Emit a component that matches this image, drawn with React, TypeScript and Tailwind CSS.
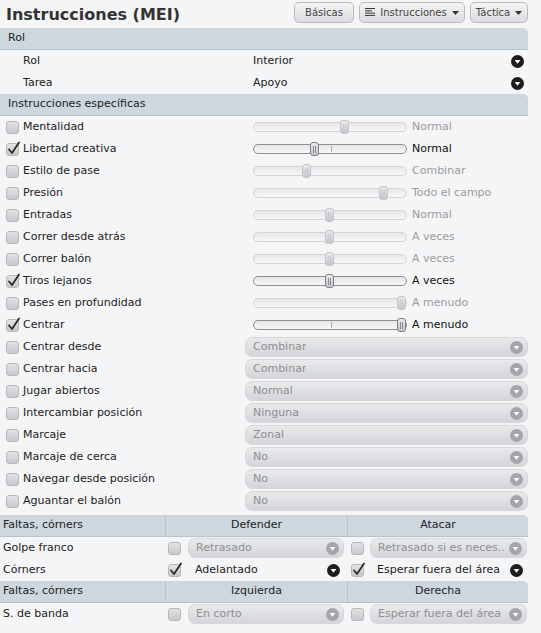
import React from "react";

const font = { fontFamily: '"DejaVu Sans", Verdana, sans-serif' };

function Arrow({ dark }: { dark?: boolean }) {
  return (
    <svg width="13" height="13" viewBox="0 0 13 13" className="shrink-0">
      <circle cx="6.5" cy="6.5" r="6.5" fill={dark ? "#1c1c1c" : "#a3a5a8"} />
      <path d="M3.6 5 L9.4 5 L6.5 8.8 Z" fill="#fff" />
    </svg>
  );
}

function Check({ on }: { on?: boolean }) {
  return (
    <div className="relative w-[13px] h-[13px] shrink-0 rounded-[3px] border border-[#b5b7ba] bg-gradient-to-b from-[#e2e3e5] to-[#c6c8cb]">
      {on && (
        <svg width="14" height="14" viewBox="0 0 14 14" className="absolute left-[0px] top-[-3px]">
          <path d="M2 8.5 L5 12 L12 1.5" fill="none" stroke="#2a2a2a" strokeWidth="1.8" strokeLinecap="round" strokeLinejoin="round" />
        </svg>
      )}
    </div>
  );
}

function Slider({ pos, active, tick }: { pos: number; active?: boolean; tick?: boolean }) {
  return (
    <div
      className={
        "relative w-[154px] h-[10px] rounded-full border bg-gradient-to-b from-[#e6e7e9] to-[#f6f7f8] " +
        (active ? "border-[#8d8f92]" : "border-[#d2d4d6]")
      }
    >
      {tick && <div className="absolute left-[77px] top-[1px] w-px h-[6px] bg-[#a9abae]" />}
      <div
        className={
          "absolute top-[-3px] w-[9px] h-[14px] rounded-[3px] border flex justify-center gap-[1px] items-center bg-gradient-to-b from-[#e9eaec] to-[#c3c5c8] " +
          (active ? "border-[#7f8184]" : "border-[#c4c6c9]")
        }
        style={{ left: pos - 5 }}
      >
        <div className={"w-px h-[7px] " + (active ? "bg-[#8a8c8f]" : "bg-[#c9cbce]")} />
        <div className={"w-px h-[7px] " + (active ? "bg-[#8a8c8f]" : "bg-[#c9cbce]")} />
      </div>
    </div>
  );
}

function Select({ text, className }: { text: string; className?: string }) {
  return (
    <div
      className={
        "h-[20px] rounded-[7px] border border-[#d6d8da] bg-gradient-to-b from-[#e9eaec] to-[#d3d5d8] flex items-center justify-between pl-[7px] pr-[4px] " +
        (className || "")
      }
    >
      <span className="text-[#8d8f92] truncate">{text}</span>
      <Arrow />
    </div>
  );
}

function Header({ children }: { children: React.ReactNode }) {
  return (
    <div className="h-[22px] bg-[#ced7de] border-b border-[#b8c2ca] rounded-tr-[5px] flex items-center pl-[8px] text-[#222]">
      {children}
    </div>
  );
}

const sliders = [
  { label: "Mentalidad", pos: 91, text: "Normal" },
  { label: "Libertad creativa", pos: 61, text: "Normal", on: true },
  { label: "Estilo de pase", pos: 53, text: "Combinar" },
  { label: "Presión", pos: 130, text: "Todo el campo" },
  { label: "Entradas", pos: 76, text: "Normal" },
  { label: "Correr desde atrás", pos: 76, text: "A veces" },
  { label: "Correr balón", pos: 76, text: "A veces" },
  { label: "Tiros lejanos", pos: 76, text: "A veces", on: true },
  { label: "Pases en profundidad", pos: 148, text: "A menudo" },
  { label: "Centrar", pos: 148, text: "A menudo", on: true },
];

const selects = [
  ["Centrar desde", "Combinar"],
  ["Centrar hacia", "Combinar"],
  ["Jugar abiertos", "Normal"],
  ["Intercambiar posición", "Ninguna"],
  ["Marcaje", "Zonal"],
  ["Marcaje de cerca", "No"],
  ["Navegar desde posición", "No"],
  ["Aguantar el balón", "No"],
];

function TabButton({ children, w }: { children: React.ReactNode; w: string }) {
  return (
    <div
      className={
        "h-[21px] rounded-[5px] border border-[#b9bbbe] bg-gradient-to-b from-[#f4f5f6] to-[#d9dbde] flex items-center justify-center gap-[5px] text-[10px] text-[#444] " +
        w
      }
    >
      {children}
    </div>
  );
}

function Caret() {
  return (
    <svg width="7" height="4" viewBox="0 0 7 4">
      <path d="M0 0 L7 0 L3.5 4 Z" fill="#333" />
    </svg>
  );
}

export default function App() {
  return (
    <div className="w-[541px] h-[633px] bg-[#f4f5f6] text-[11px] text-[#222] overflow-hidden" style={font}>
      <div className="w-[528px]">
        <div className="h-[28px] flex items-start justify-between">
          <div className="pl-[6px] pt-[3px] text-[16px] font-bold text-[#333]">Instrucciones (MEI)</div>
          <div className="flex gap-[5px] pt-[2px]">
            <TabButton w="w-[60px]">Básicas</TabButton>
            <TabButton w="w-[106px]">
              <svg width="10" height="9" viewBox="0 0 10 9">
                <path d="M0 0.5H10M0 2.8H7M0 5.1H10M0 7.4H10" stroke="#333" strokeWidth="1" />
              </svg>
              Instrucciones
              <Caret />
            </TabButton>
            <TabButton w="w-[58px]">
              Táctica
              <Caret />
            </TabButton>
          </div>
        </div>

        <Header>Rol</Header>
        {[
          ["Rol", "Interior"],
          ["Tarea", "Apoyo"],
        ].map(([l, v]) => (
          <div key={l} className="h-[22px] flex items-center">
            <div className="w-[253px] pl-[23px]">{l}</div>
            <div className="flex-1">{v}</div>
            <div className="pr-[4px]">
              <Arrow dark />
            </div>
          </div>
        ))}

        <Header>Instrucciones específicas</Header>
        {sliders.map((s) => (
          <div key={s.label} className="h-[22px] flex items-center">
            <div className="w-[253px] flex items-center pl-[6px] gap-[4px]">
              <Check on={s.on} />
              <span>{s.label}</span>
            </div>
            <Slider pos={s.pos} active={s.on} tick={s.on} />
            <span className={"pl-[5px] " + (s.on ? "text-[#111]" : "text-[#9a9c9f]")}>{s.text}</span>
          </div>
        ))}
        {selects.map(([l, v]) => (
          <div key={l} className="h-[22px] flex items-center">
            <div className="w-[245px] flex items-center pl-[6px] gap-[4px]">
              <Check />
              <span>{l}</span>
            </div>
            <Select text={v} className="flex-1" />
          </div>
        ))}

        <div className="mt-[3px] grid grid-cols-[166px_182px_180px] h-[22px] bg-[#ced7de] border-b border-[#b8c2ca] rounded-tr-[5px] items-center">
          <div className="pl-[3px] border-r border-[#b8c2ca] h-full flex items-center">Faltas, córners</div>
          <div className="text-center border-r border-[#b8c2ca] h-full flex items-center justify-center">Defender</div>
          <div className="text-center">Atacar</div>
        </div>
        <div className="grid grid-cols-[166px_182px_180px] h-[22px] items-center">
          <div className="pl-[3px]">Golpe franco</div>
          <div className="flex items-center gap-[7px] pl-[2px] pr-[4px]">
            <Check />
            <Select text="Retrasado" className="flex-1" />
          </div>
          <div className="flex items-center gap-[6px] pl-[3px] pr-[1px]">
            <Check />
            <Select text="Retrasado si es neces.." className="flex-1" />
          </div>
        </div>
        <div className="grid grid-cols-[166px_182px_180px] h-[22px] items-center">
          <div className="pl-[3px]">Córners</div>
          <div className="flex items-center pl-[2px] pr-[8px]">
            <Check on />
            <span className="pl-[14px] flex-1">Adelantado</span>
            <Arrow dark />
          </div>
          <div className="flex items-center pl-[3px] pr-[5px]">
            <Check on />
            <span className="pl-[13px] flex-1">Esperar fuera del área</span>
            <Arrow dark />
          </div>
        </div>
        <div className="grid grid-cols-[166px_182px_180px] h-[22px] bg-[#ced7de] border-b border-[#b8c2ca] rounded-tr-[5px] items-center">
          <div className="pl-[3px] border-r border-[#b8c2ca] h-full flex items-center">Faltas, córners</div>
          <div className="text-center border-r border-[#b8c2ca] h-full flex items-center justify-center">Izquierda</div>
          <div className="text-center">Derecha</div>
        </div>
        <div className="grid grid-cols-[166px_182px_180px] h-[22px] items-center">
          <div className="pl-[3px]">S. de banda</div>
          <div className="flex items-center gap-[7px] pl-[2px] pr-[4px]">
            <Check />
            <Select text="En corto" className="flex-1" />
          </div>
          <div className="flex items-center gap-[6px] pl-[3px] pr-[1px]">
            <Check />
            <Select text="Esperar fuera del área" className="flex-1" />
          </div>
        </div>
      </div>
    </div>
  );
}
